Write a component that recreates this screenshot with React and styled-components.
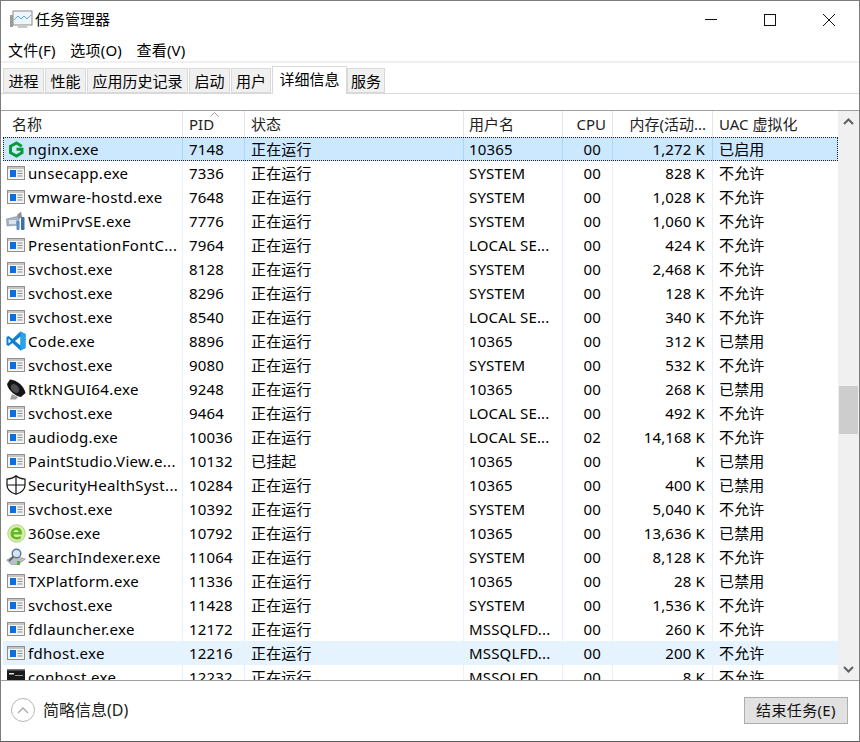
import styled, { createGlobalStyle } from "styled-components";

const GlobalStyle = createGlobalStyle`
  html, body { margin: 0; padding: 0; background: #fff; }
  * { box-sizing: border-box; }
  body {
    font-family: "Noto Sans", "Noto Sans CJK SC", sans-serif;
    font-size: 15px;
    color: #000;
  }
`;

const Window = styled.div`
  width: 860px;
  height: 742px;
  border: 1px solid #7c7c7c;
  border-bottom-color: #5c5c5c;
  display: flex;
  flex-direction: column;
  overflow: hidden;
  background: #fff;
`;

const TitleBar = styled.div`
  height: 37px;
  flex: none;
  display: flex;
  align-items: center;
  padding-left: 9px;
`;

const TitleText = styled.span`
  margin-left: 2px;
  line-height: 37px;
`;

const WinButtons = styled.div`
  margin-left: auto;
  display: flex;
  height: 37px;
  padding-right: 1px;
`;

const WinButton = styled.div`
  width: 59px;
  display: flex;
  align-items: center;
  justify-content: center;
`;

const MenuBar = styled.div`
  height: 25px;
  flex: none;
  display: flex;
  gap: 14.5px;
  padding-left: 7px;
  align-items: center;
  border-bottom: 2px solid #f0f0f0;
  letter-spacing: 0.2px;
`;

const MenuItem = styled.span`
  line-height: 22px;
`;

const TabStrip = styled.div`
  height: 31px;
  flex: none;
  display: flex;
  align-items: flex-end;
  padding-left: 2px;
  border-bottom: 1px solid #d9d9d9;
`;

const Tab = styled.div`
  height: ${p => (p.$active ? "28px" : "25px")};
  width: ${p => p.$w}px;
  margin-right: ${p => (p.$active ? "0" : "1px")};
  margin-bottom: ${p => (p.$active ? "-1px" : "0")};
  padding-bottom: ${p => (p.$active ? "3px" : "0")};
  background: ${p => (p.$active ? "#fff" : "#f0f0f0")};
  border: 1px solid #d9d9d9;
  border-bottom: ${p => (p.$active ? "none" : "1px solid #d9d9d9")};
  display: flex;
  align-items: center;
  justify-content: center;
  white-space: nowrap;
  line-height: 24px;
  position: relative;
  z-index: ${p => (p.$active ? 1 : 0)};
`;

const Gap = styled.div`
  height: 17px;
  flex: none;
  border-bottom: 1px solid #a0a0a0;
`;

const ListArea = styled.div`
  height: 570px;
  flex: none;
  display: flex;
  border-bottom: 1px solid #a0a0a0;
`;

const ListMain = styled.div`
  flex: 1;
  min-width: 0;
  overflow: hidden;
`;

const columns = "180px 62px 219px 99px 50px 100px 1fr";

const HeaderRow = styled.div`
  display: grid;
  grid-template-columns: ${columns};
  height: 26px;
  padding-left: 2px;
  color: #222;
`;

const HeaderCell = styled.div`
  position: relative;
  border-right: 1px solid #e5e5e5;
  padding: 0 ${p => (p.$pr || 6)}px 0 ${p => (p.$pl || 6)}px;
  text-align: ${p => (p.$right ? "right" : "left")};
  line-height: 26px;
  white-space: nowrap;
  overflow: hidden;
  &:last-child { border-right: none; }
`;

const SortMark = styled.svg`
  position: absolute;
  left: 27px;
  top: 1px;
`;

const Row = styled.div`
  display: grid;
  grid-template-columns: ${columns};
  height: 24px;
  position: relative;
  padding-left: 2px;
  background-clip: content-box;
  background-color: ${p => (p.$selected ? "#cce8ff" : p.$hover ? "#e5f3ff" : "transparent")};
  letter-spacing: 0.15px;
  ${p => p.$selected && `
    &::after {
      content: "";
      position: absolute;
      inset: 0 0 0 2px;
      border: 1px dotted #222;
      pointer-events: none;
    }
  `}
`;

const Cell = styled.div`
  border-right: 1px solid ${p => (p.$selected ? "#a9d8fb" : "#e8f1fb")};
  padding: 0 ${p => (p.$pr || 6)}px 0 ${p => (p.$pl || 6)}px;
  line-height: 25px;
  white-space: nowrap;
  overflow: hidden;
  text-align: ${p => (p.$right ? "right" : "left")};
  &:last-child { border-right: none; }
`;

const NameCell = styled(Cell)`
  display: flex;
  align-items: center;
  padding: 0 0 0 4px;
  gap: 3px;
  letter-spacing: 0.32px;
`;

const IconBox = styled.span`
  width: 18px;
  height: 20px;
  flex: none;
  display: flex;
  align-items: center;
  justify-content: center;
`;

const Scrollbar = styled.div`
  width: 21px;
  flex: none;
  background: #f0f0f0;
  display: flex;
  flex-direction: column;
  align-items: center;
`;

const ScrollArrow = styled.div`
  height: 21px;
  flex: none;
  display: flex;
  align-items: center;
  justify-content: center;
  margin-top: ${p => (p.$bottom ? "auto" : "0")};
`;

const ScrollThumb = styled.div`
  width: 19px;
  height: 48px;
  margin-top: 254px;
  background: #cdcdcd;
`;

const Footer = styled.div`
  flex: 1;
  display: flex;
  align-items: center;
  padding: 0 11px 2px 10px;
`;

const CollapseButton = styled.div`
  width: 24px;
  height: 24px;
  border: 1px solid #b5b5b5;
  border-radius: 50%;
  display: flex;
  align-items: center;
  justify-content: center;
`;

const CollapseLabel = styled.span`
  margin-left: 8px;
  color: #222;
  font-size: 16px;
  line-height: 24px;
`;

const EndTask = styled.div`
  margin-left: auto;
  width: 104px;
  height: 27px;
  background: #e1e1e1;
  border: 1px solid #adadad;
  display: flex;
  align-items: center;
  justify-content: center;
  line-height: 25px;
  color: #111;
  letter-spacing: 0.35px;
`;

const FlexIcon = styled.svg`
  flex: none;
  overflow: visible;
`;

function AppIcon() {
  return (
    <FlexIcon width="18" height="14" viewBox="0 0 18 14">
      <rect x="0.5" y="0.5" width="17" height="13" fill="#f4f4f4" stroke="#8f8f8f" />
      <rect x="1" y="1" width="16" height="2" fill="#c5c5c5" />
      <rect x="3" y="4" width="6" height="7" fill="#0a6fe0" />
      <rect x="10.5" y="4.5" width="5" height="1" fill="#8a8a8a" />
      <rect x="10.5" y="7" width="5" height="1" fill="#8a8a8a" />
      <rect x="10.5" y="9.5" width="5" height="1" fill="#8a8a8a" />
    </FlexIcon>
  );
}

function NginxIcon() {
  return (
    <FlexIcon width="17" height="17" viewBox="0 0 17 17">
      <path d="M13.800 5.200 8.500 2 2.500 5.300v6.400L8.500 15l5.500-3.300V8.300H8.500" fill="none" stroke="#0b9a3a" strokeWidth="3" />
    </FlexIcon>
  );
}

function CodeIcon() {
  return (
    <FlexIcon width="20" height="20" viewBox="0 0 20 20">
      <path d="M14.500 0.500 19.500 3v14l-5 2.500L6.500 12 2.500 15 0.500 14V6l2-1 4 3Z" fill="#0e7fd2" />
      <path d="M14.500 5.500 9 10l5.500 4.500Z" fill="#fff" />
      <path d="M2.500 7.500 5 10l-2.500 2.500Z" fill="#fff" />
      <path d="M14.500 0.500 19.500 3v14l-5 2.500Z" fill="#2aa3ec" />
    </FlexIcon>
  );
}

function WmiIcon() {
  return (
    <FlexIcon width="20" height="20" viewBox="0 0 20 20">
      <path d="M0.500 8 13 5v9L1 15Z" fill="#a3b5c8" stroke="#7c8a99" strokeWidth="0.600" />
      <rect x="3" y="9" width="7" height="4" fill="#dbe3ea" />
      <path d="M11 4 15 0.500 16 6 13 8Z" fill="#8a8f96" />
      <rect x="15" y="6" width="3.500" height="13" rx="1" fill="#3d6ea8" />
      <rect x="10.500" y="10" width="3" height="9" rx="1" fill="#5c8dc4" />
    </FlexIcon>
  );
}

function SpeakerIcon() {
  return (
    <FlexIcon width="20" height="21" viewBox="0 0 20 21">
      <path d="M4 0.500C11 1 18 7 19.500 14L15 18C9 17 2 11 1 5Z" fill="#151515" />
      <ellipse cx="9" cy="9.500" rx="3.500" ry="5" fill="#4d4d4d" transform="rotate(-40 9 9.500)" />
      <path d="M6 15 12 18 10 20.500H4Z" fill="#a0a0a0" />
    </FlexIcon>
  );
}

function ShieldIcon() {
  return (
    <FlexIcon width="20" height="20" viewBox="0 0 20 20">
      <path d="M10 0.800C7.500 3 4.500 4 1 4v6c0 4 3.500 7.500 9 9.300 5.500-1.800 9-5.300 9-9.300V4c-3.500 0-6.500-1-9-3.200Z" fill="#fff" stroke="#111" strokeWidth="1.200" />
      <path d="M10 1V19M1.200 10H18.800" stroke="#111" strokeWidth="1.200" />
    </FlexIcon>
  );
}

function Se360Icon() {
  return (
    <FlexIcon width="19" height="19" viewBox="0 0 19 19">
      <circle cx="9.500" cy="9.500" r="8.800" fill="#d6ecb0" stroke="#a5cf66" strokeWidth="0.800" />
      <path d="M15 10.500H6.500c.2 2.500 3.800 3.600 7.300 1.500v2.600c-4.500 2-10 .5-10.200-4.500-.2-5 4.400-7.200 7.800-6.300 2.600.7 3.800 3.300 3.600 6.700Z" fill="#62b81f" />
      <path d="M6.500 8h5c-.2-2.300-4.400-2.500-5 0Z" fill="#fff" />
    </FlexIcon>
  );
}

function SearchIcon() {
  return (
    <FlexIcon width="20" height="18" viewBox="0 0 20 18">
      <path d="M0.500 12 9 8 19.500 11 12 16.500H5Z" fill="#bcbfc3" stroke="#8a8e93" strokeWidth="0.600" />
      <circle cx="10.500" cy="5.500" r="4.300" fill="#d4e4f3" stroke="#5a7894" strokeWidth="1.400" />
      <path d="M7.500 8.500 3 13" stroke="#5a6672" strokeWidth="2.200" />
      <path d="M11 13h3v4h-3Z" fill="#5aa84a" />
    </FlexIcon>
  );
}

function ConsoleIcon() {
  return (
    <FlexIcon width="18" height="16" viewBox="0 0 18 16">
      <rect width="18" height="16" fill="#1a1a1a" />
      <rect x="0" y="0" width="18" height="1.500" fill="#777" />
      <rect x="2" y="4" width="5" height="1.500" fill="#ddd" />
      <rect x="8" y="6" width="8" height="1" fill="#999" />
    </FlexIcon>
  );
}

const icons = {
  app: AppIcon,
  nginx: NginxIcon,
  code: CodeIcon,
  wmi: WmiIcon,
  speaker: SpeakerIcon,
  shield: ShieldIcon,
  se: Se360Icon,
  search: SearchIcon,
  console: ConsoleIcon,
};

const RUN = "正在运行";
const SYS = "SYSTEM";
const LOCAL = "LOCAL SE...";
const USER = "10365";
const MSSQL = "MSSQLFD...";
const NO = "不允许";
const OFF = "已禁用";

const rows = [
  ["nginx", "nginx.exe", "7148", RUN, USER, "00", "1,272 K", "已启用"],
  ["app", "unsecapp.exe", "7336", RUN, SYS, "00", "828 K", NO],
  ["app", "vmware-hostd.exe", "7648", RUN, SYS, "00", "1,028 K", NO],
  ["wmi", "WmiPrvSE.exe", "7776", RUN, SYS, "00", "1,060 K", NO],
  ["app", "PresentationFontC...", "7964", RUN, LOCAL, "00", "424 K", NO],
  ["app", "svchost.exe", "8128", RUN, SYS, "00", "2,468 K", NO],
  ["app", "svchost.exe", "8296", RUN, SYS, "00", "128 K", NO],
  ["app", "svchost.exe", "8540", RUN, LOCAL, "00", "340 K", NO],
  ["code", "Code.exe", "8896", RUN, USER, "00", "312 K", OFF],
  ["app", "svchost.exe", "9080", RUN, SYS, "00", "532 K", NO],
  ["speaker", "RtkNGUI64.exe", "9248", RUN, USER, "00", "268 K", OFF],
  ["app", "svchost.exe", "9464", RUN, LOCAL, "00", "492 K", NO],
  ["app", "audiodg.exe", "10036", RUN, LOCAL, "02", "14,168 K", NO],
  ["app", "PaintStudio.View.e...", "10132", "已挂起", USER, "00", "K", OFF],
  ["shield", "SecurityHealthSyst...", "10284", RUN, USER, "00", "400 K", OFF],
  ["app", "svchost.exe", "10392", RUN, SYS, "00", "5,040 K", NO],
  ["se", "360se.exe", "10792", RUN, USER, "00", "13,636 K", OFF],
  ["search", "SearchIndexer.exe", "11064", RUN, SYS, "00", "8,128 K", NO],
  ["app", "TXPlatform.exe", "11336", RUN, USER, "00", "28 K", OFF],
  ["app", "svchost.exe", "11428", RUN, SYS, "00", "1,536 K", NO],
  ["app", "fdlauncher.exe", "12172", RUN, MSSQL, "00", "260 K", NO],
  ["app", "fdhost.exe", "12216", RUN, MSSQL, "00", "200 K", NO],
  ["console", "conhost.exe", "12232", RUN, MSSQL, "00", "8 K", NO],
];

const tabs = [
  ["进程", 41],
  ["性能", 41],
  ["应用历史记录", 101],
  ["启动", 41],
  ["用户", 40],
  ["详细信息", 75],
  ["服务", 38],
];

export default function App() {
  return (
    <>
      <GlobalStyle />
      <Window>
        <TitleBar>
          <svg width="23" height="19" viewBox="0 0 23 19">
            <rect x="3" y="1" width="19" height="14" fill="#eef6fc" stroke="#8b8b8b" />
            <path d="M4 10 8 6l3 3 3-3 3 3 4-4" fill="none" stroke="#5aa7dc" strokeWidth="1" />
            <path d="M9 15h7l2 3H7Z" fill="#c9c9c9" />
            <rect x="0" y="5" width="3" height="12" fill="#9a9a9a" />
            <rect x="1" y="7" width="1" height="2" fill="#4ccb4c" />
          </svg>
          <TitleText>任务管理器</TitleText>
          <WinButtons>
            <WinButton>
              <svg width="12" height="12" viewBox="0 0 12 12"><path d="M0 5.500h12" stroke="#111" /></svg>
            </WinButton>
            <WinButton>
              <svg width="12" height="12" viewBox="0 0 12 12"><rect x="0.500" y="0.500" width="11" height="11" fill="none" stroke="#111" /></svg>
            </WinButton>
            <WinButton>
              <svg width="12" height="12" viewBox="0 0 12 12"><path d="M0 0 12 12M12 0 0 12" stroke="#111" /></svg>
            </WinButton>
          </WinButtons>
        </TitleBar>
        <MenuBar>
          <MenuItem>文件(F)</MenuItem>
          <MenuItem>选项(O)</MenuItem>
          <MenuItem>查看(V)</MenuItem>
        </MenuBar>
        <TabStrip>
          {tabs.map(([label, w]) => (
            <Tab key={label} $w={w} $active={label === "详细信息"}>{label}</Tab>
          ))}
        </TabStrip>
        <Gap />
        <ListArea>
          <ListMain>
            <HeaderRow>
              <HeaderCell $pl={9}>名称</HeaderCell>
              <HeaderCell>
                PID
                <SortMark width="9" height="5" viewBox="0 0 9 5">
                  <path d="M0.500 4.500 4.500 0.500 8.500 4.500" fill="none" stroke="#9a9a9a" />
                </SortMark>
              </HeaderCell>
              <HeaderCell>状态</HeaderCell>
              <HeaderCell $pl={5}>用户名</HeaderCell>
              <HeaderCell $right>CPU</HeaderCell>
              <HeaderCell $right>内存(活动...</HeaderCell>
              <HeaderCell>UAC 虚拟化</HeaderCell>
            </HeaderRow>
            {rows.map(([icon, name, pid, status, user, cpu, mem, uac], i) => {
              const Icon = icons[icon];
              const selected = i === 0;
              return (
                <Row key={pid} $selected={selected} $hover={name === "fdhost.exe"}>
                  <NameCell $selected={selected}>
                    <IconBox><Icon /></IconBox>
                    {name}
                  </NameCell>
                  <Cell $selected={selected}>{pid}</Cell>
                  <Cell $selected={selected}>{status}</Cell>
                  <Cell $selected={selected} $pl={5}>{user}</Cell>
                  <Cell $selected={selected} $right $pr={11}>{cpu}</Cell>
                  <Cell $selected={selected} $right $pr={7}>{mem}</Cell>
                  <Cell $selected={selected}>{uac}</Cell>
                </Row>
              );
            })}
          </ListMain>
          <Scrollbar>
            <ScrollArrow>
              <svg width="11" height="7" viewBox="0 0 11 7"><path d="M1 6 5.500 1.500 10 6" fill="none" stroke="#606060" strokeWidth="2" /></svg>
            </ScrollArrow>
            <ScrollThumb />
            <ScrollArrow $bottom>
              <svg width="11" height="7" viewBox="0 0 11 7"><path d="M1 1 5.500 5.500 10 1" fill="none" stroke="#606060" strokeWidth="2" /></svg>
            </ScrollArrow>
          </Scrollbar>
        </ListArea>
        <Footer>
          <CollapseButton>
            <svg width="12" height="7" viewBox="0 0 12 7"><path d="M1 6 6 1l5 5" fill="none" stroke="#a8a8a8" strokeWidth="1.300" /></svg>
          </CollapseButton>
          <CollapseLabel>简略信息(D)</CollapseLabel>
          <EndTask>结束任务(E)</EndTask>
        </Footer>
      </Window>
    </>
  );
}
